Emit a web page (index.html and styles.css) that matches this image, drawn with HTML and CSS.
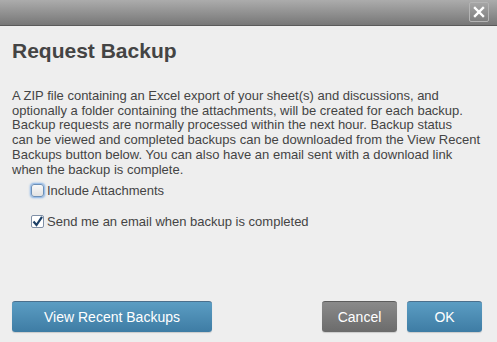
FILE: index.html
```html
<!DOCTYPE html>
<html lang="en">
<head>
  <meta charset="UTF-8">
  <title>Request Backup</title>
  <link rel="stylesheet" href="styles.css">
</head>
<body>
  <div class="dialog">
    <div class="titlebar">
      <button class="close-btn" title="Close">
        <svg width="12" height="12" viewBox="0 0 12 12"><path d="M2 2 L10 10 M10 2 L2 10" stroke="#fff" stroke-width="2.4" stroke-linecap="square"/></svg>
      </button>
    </div>

    <div class="content">
      <h1 class="dialog-title">Request Backup</h1>
      <p class="desc">A ZIP file containing an Excel export of your sheet(s) and discussions, and<br>
        optionally a folder containing the attachments, will be created for each backup.<br>
        Backup requests are normally processed within the next hour. Backup status<br>
        can be viewed and completed backups can be downloaded from the View Recent<br>
        Backups button below. You can also have an email sent with a download link<br>
        when the backup is complete.</p>

      <label class="option">
        <span class="check focused"></span>
        Include Attachments
      </label>
      <label class="option">
        <span class="check checked">
          <svg width="11" height="11" viewBox="0 0 11 11"><path d="M1.5 5.5 L4.5 9 L10 0.8" fill="none" stroke="#1c3f66" stroke-width="2.2"/></svg>
        </span>
        Send me an email when backup is completed
      </label>
    </div>

    <div class="footer">
      <button class="btn btn-blue btn-wide">View Recent Backups</button>
      <div class="footer-right">
        <button class="btn btn-gray">Cancel</button>
        <button class="btn btn-blue">OK</button>
      </div>
    </div>
  </div>
</body>
</html>
```

FILE: styles.css
```css
* {
  box-sizing: border-box;
}
body {
  margin: 0;
  font-family: 'Liberation Sans', Arial, sans-serif;
  background: #eeeeee;
}
.dialog {
  width: 497px;
  height: 342px;
  display: flex;
  flex-direction: column;
  background: #eeeeee;
  overflow: hidden;
}
.titlebar {
  height: 26px;
  background: linear-gradient(to bottom, #acacac, #777);
  border-bottom: 1px solid #5a5a5a;
  display: flex;
  justify-content: flex-end;
  align-items: flex-start;
  padding: 2px 8px 0 0;
}
.close-btn {
  width: 20px;
  height: 20px;
  padding: 0;
  background: transparent;
  border: 1px solid #b4b4b4;
  border-radius: 2px;
  display: flex;
  align-items: center;
  justify-content: center;
  cursor: pointer;
}
.content {
  padding: 0 12px;
}
.dialog-title {
  margin: 13px 0 0;
  font-size: 21px;
  font-weight: bold;
  color: #444;
  line-height: 24px;
}
.desc {
  margin: 26px 0 0;
  font-size: 13px;
  line-height: 14.7px;
  color: #444;
  white-space: nowrap;
}
.option {
  display: flex;
  align-items: center;
  gap: 3px;
  margin-left: 19px;
  font-size: 13px;
  color: #444;
  height: 16px;
}
.option:first-of-type {
  margin-top: 5px;
}
.option + .option {
  margin-top: 15px;
}
.check {
  width: 13px;
  height: 13px;
  border: 1px solid #7f9db9;
  border-radius: 3px;
  background: linear-gradient(to bottom, #f8f8f8, #e2e2e2);
  display: flex;
  align-items: center;
  justify-content: center;
}
.check.focused {
  border-color: #6d90b8;
  box-shadow: 0 0 2px 1px #7eaee6;
}
.check.checked {
  background: #fff;
  border-color: #7f8fa6;
  border-radius: 2px;
}
.footer {
  margin-top: auto;
  display: flex;
  justify-content: space-between;
  padding: 0 15px 10px 12px;
}
.footer-right {
  display: flex;
  gap: 10px;
}
.btn {
  height: 31px;
  width: 75px;
  border: none;
  border-radius: 3px;
  color: #fff;
  font-family: 'Liberation Sans', Arial, sans-serif;
  font-size: 14px;
  cursor: pointer;
  box-shadow: 0 1px 1px rgba(0, 0, 0, 0.15);
}
.btn-wide {
  width: 200px;
}
.btn-blue {
  background: linear-gradient(to bottom, #5b9dc3, #3e7ca4);
  border-top: 1px solid #4a6f8c;
}
.btn-gray {
  background: linear-gradient(to bottom, #8a8a8a, #6b6b6b);
  border-top: 1px solid #5c5c5c;
}
```
